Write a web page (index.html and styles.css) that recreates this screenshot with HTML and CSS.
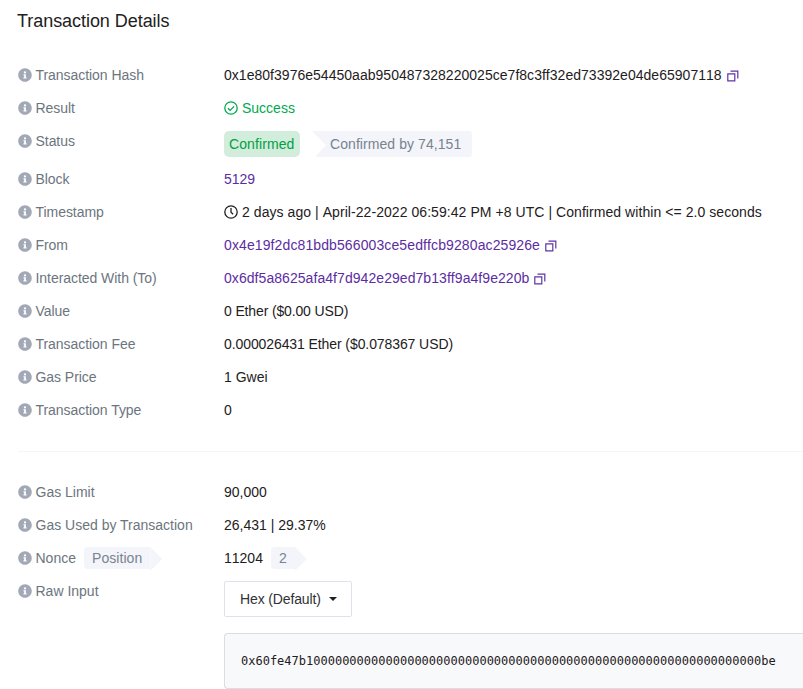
FILE: index.html
```
<!DOCTYPE html>
<html lang="en">
<head>
<meta charset="utf-8">
<title>Transaction Details</title>
<link rel="stylesheet" href="styles.css">
</head>
<body>
<svg class="defs" aria-hidden="true">
  <symbol id="info" viewBox="0 0 512 512"><path fill="currentColor" d="M256 8C119 8 8 119 8 256s111 248 248 248 248-111 248-248S393 8 256 8zm0 110a42 42 0 1 1 0 84 42 42 0 0 1 0-84zm56 254c0 7-5 12-12 12h-88c-7 0-12-5-12-12v-24c0-7 5-12 12-12h12v-64h-12c-7 0-12-5-12-12v-24c0-7 5-12 12-12h64c7 0 12 5 12 12v100h12c7 0 12 5 12 12v24z"/></symbol>
  <symbol id="copy" viewBox="0 0 12 12"><path fill="none" stroke="currentColor" stroke-width="1.2" d="M.8 3.8h7v7h-7zM3.5 1.2h7.3v7.3"/></symbol>
</svg>
<main class="details">
  <h1 class="title">Transaction Details</h1>
  <dl class="rows">
    <div class="row"><dt><svg class="info"><use href="#info"/></svg><span>Transaction Hash</span></dt><dd><span class="hash">0x1e80f3976e54450aab950487328220025ce7f8c3ff32ed73392e04de65907118</span><svg class="copy"><use href="#copy"/></svg></dd></div>
    <div class="row"><dt><svg class="info"><use href="#info"/></svg><span>Result</span></dt><dd class="success"><svg class="icon" viewBox="0 0 14 14"><circle cx="7" cy="7" r="6.2"/><path d="M3.9 7.3l2.2 2.1 4-4"/></svg><span>Success</span></dd></div>
    <div class="row status"><dt><svg class="info"><use href="#info"/></svg><span>Status</span></dt><dd><span class="badge">Confirmed</span><span class="ribbon">Confirmed by 74,151</span></dd></div>
    <div class="row"><dt><svg class="info"><use href="#info"/></svg><span>Block</span></dt><dd class="link">5129</dd></div>
    <div class="row"><dt><svg class="info"><use href="#info"/></svg><span>Timestamp</span></dt><dd><svg class="icon" viewBox="0 0 14 14"><circle cx="7" cy="7" r="6.2"/><path d="M7 3v4.3l2.1 2"/></svg><span class="time">2 days ago | April-22-2022 06:59:42 PM +8 UTC | Confirmed within &lt;= 2.0 seconds</span></dd></div>
    <div class="row"><dt><svg class="info"><use href="#info"/></svg><span>From</span></dt><dd class="link"><span class="from">0x4e19f2dc81bdb566003ce5edffcb9280ac25926e</span><svg class="copy"><use href="#copy"/></svg></dd></div>
    <div class="row"><dt><svg class="info"><use href="#info"/></svg><span>Interacted With (To)</span></dt><dd class="link"><span class="to">0x6df5a8625afa4f7d942e29ed7b13ff9a4f9e220b</span><svg class="copy"><use href="#copy"/></svg></dd></div>
    <div class="row"><dt><svg class="info"><use href="#info"/></svg><span>Value</span></dt><dd class="value">0 Ether ($0.00 USD)</dd></div>
    <div class="row"><dt><svg class="info"><use href="#info"/></svg><span>Transaction Fee</span></dt><dd class="fee">0.000026431 Ether ($0.078367 USD)</dd></div>
    <div class="row"><dt><svg class="info"><use href="#info"/></svg><span>Gas Price</span></dt><dd>1 Gwei</dd></div>
    <div class="row"><dt><svg class="info"><use href="#info"/></svg><span>Transaction Type</span></dt><dd>0</dd></div>
  </dl>
  <dl class="rows more">
    <div class="row"><dt><svg class="info"><use href="#info"/></svg><span>Gas Limit</span></dt><dd>90,000</dd></div>
    <div class="row"><dt><svg class="info"><use href="#info"/></svg><span>Gas Used by Transaction</span></dt><dd>26,431 | 29.37%</dd></div>
    <div class="row"><dt><svg class="info"><use href="#info"/></svg><span>Nonce</span><span class="tag">Position</span></dt><dd><span>11204</span><span class="tag">2</span></dd></div>
    <div class="row raw"><dt><svg class="info"><use href="#info"/></svg><span>Raw Input</span></dt><dd><button class="select">Hex (Default)<span class="caret"></span></button><pre class="code">0x60fe47b100000000000000000000000000000000000000000000000000000000000000be</pre></dd></div>
  </dl>
</main>
</body>
</html>
```
FILE: styles.css
```
* { box-sizing: border-box; }
body { margin: 0; height: 689px; overflow: hidden; background: #fff; color: #1e2022; font: 14px/21px "Liberation Sans", Arial, sans-serif; }
.defs { position: absolute; width: 0; height: 0; }
.details { padding: 10px 0 0 18px; }
.title { margin: 0 0 0 -1px; font-size: 18px; font-weight: 400; line-height: 22px; letter-spacing: -.05px; }
.rows { margin: 33px 0 0; }
.row { display: grid; grid-template-columns: 206px 1fr; height: 33px; }
.row dt, .row dd { display: flex; align-items: center; height: 21px; margin: 0; white-space: nowrap; }
.row dt { color: #6c757e; letter-spacing: -.05px; }
.more .row dt { letter-spacing: 0; }
.row dd { font-kerning: none; }
.info { width: 14px; height: 14px; margin: 0 4px 1px -.5px; color: #a2a8b6; flex: none; }
.icon { width: 14px; height: 14px; margin: 0 4px 1px 0; fill: none; stroke: currentColor; stroke-width: 1.3; flex: none; }
.copy { width: 12px; height: 12px; margin: 1px 0 0 5px; color: #5d35a5; flex: none; }
.success { color: #00a94f; }
.link { color: #5b2da3; }
.hash { letter-spacing: .026px; }
.time { letter-spacing: .06px; }
.from { letter-spacing: .11px; }
.to { letter-spacing: .06px; }
.value { letter-spacing: -.14px; }
.fee { letter-spacing: -.09px; }
.row.status { height: 38px; }
.row.status dd { height: 26px; }
.badge { width: 76px; height: 26px; padding: 3px 5px; border-radius: 5px; background: #d2eddc; color: #00a043; letter-spacing: .1px; }
.ribbon { width: 160px; height: 26px; margin-left: 12px; padding: 3px 0 0 18px; background: #f4f5fa; color: #77838f; letter-spacing: .07px; border-radius: 0 3px 3px 0; clip-path: polygon(0 0, 100% 0, 100% 100%, 3px 100%, 14px 14px); }
.more { margin-top: 18px; padding-top: 30px; border-top: 1px solid #f5f5f6; }
.tag { position: relative; height: 22px; margin: 0 0 1px 8px; padding: 1px 8px 0; background: #f4f5fa; border-radius: 4px 0 0 4px; color: #77838f; letter-spacing: .07px; }
.tag::after { content: ""; position: absolute; left: 100%; top: 0; width: 12px; height: 24px; background: #f4f5fa; clip-path: polygon(0 0, 100% 50%, 0 100%); }
.row.raw { height: auto; }
.row.raw dd { display: block; height: auto; }
.select { display: flex; align-items: center; width: 128px; height: 36px; margin: 0; padding: 0 15px; border: 1px solid #dfe2eb; border-radius: 2px; background: #fff; color: #303236; font: inherit; letter-spacing: -.13px; }
.caret { margin-left: 8px; border: 4px solid transparent; border-top-color: #1e2022; border-bottom: 0; }
.code { height: 56px; margin: 16px 0 0; padding: 17px 16px; border: 1px solid #d9dee3; border-right: 0; border-radius: 4px 0 0 4px; background: #f8f9fb; font: 12px/20px "DejaVu Sans Mono", monospace; }
```
